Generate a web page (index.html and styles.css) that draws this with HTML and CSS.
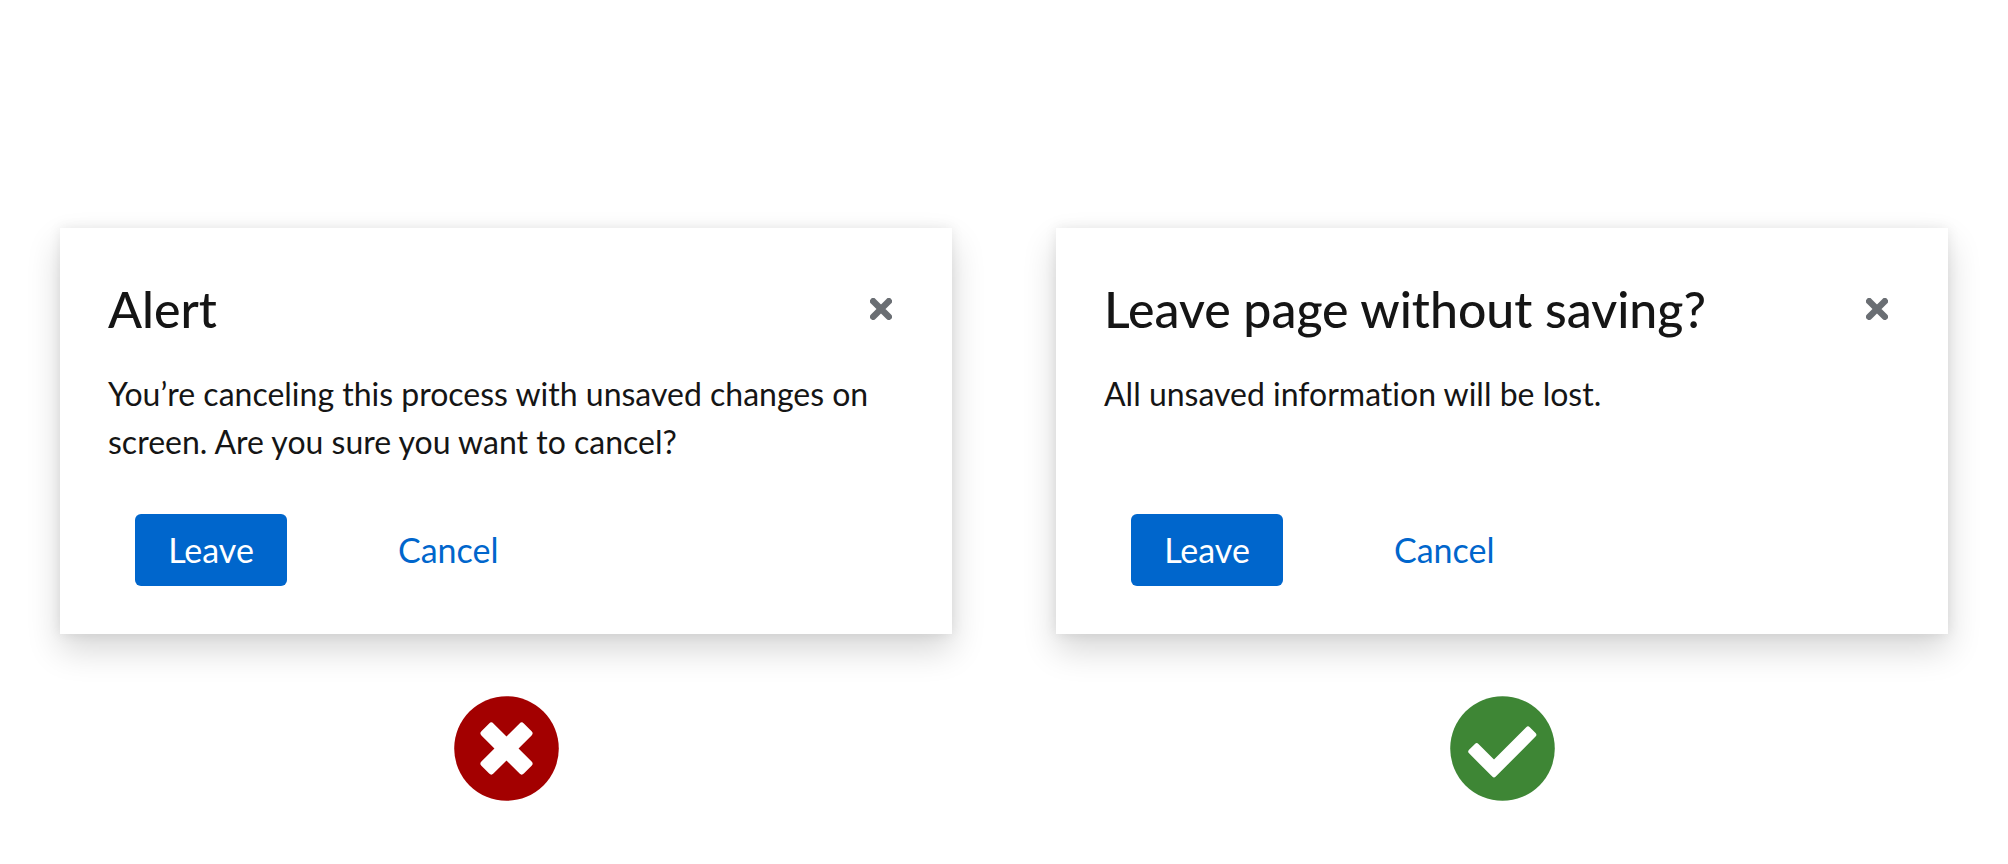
FILE: index.html
```html
<!DOCTYPE html>
<html lang="en">
<head>
<meta charset="utf-8">
<meta name="viewport" content="width=device-width, initial-scale=1">
<title>Dialog guidelines</title>
<link rel="stylesheet" href="styles.css">
</head>
<body>
<main class="examples">
  <section class="example">
    <div class="modal" role="dialog" aria-labelledby="title-dont">
      <header class="modal-header">
        <h2 class="modal-title" id="title-dont">Alert</h2>
        <button class="close" type="button" aria-label="Close">
          <svg class="close-icon" viewBox="0 0 22 22" aria-hidden="true"><path d="M3.2 3.2 18.8 18.8M18.8 3.2 3.2 18.8"/></svg>
        </button>
      </header>
      <p class="modal-body">You’re canceling this process with unsaved changes on screen. Are you sure you want to cancel?</p>
      <footer class="modal-footer">
        <button class="btn btn-primary" type="button">Leave</button>
        <button class="btn btn-link" type="button">Cancel</button>
      </footer>
    </div>
    <svg class="verdict" viewBox="0 0 105 105" role="img" aria-label="Don't">
      <circle class="bad" cx="52.5" cy="52.5" r="52.3"/>
      <g class="cross" transform="rotate(45 52.5 52.5)">
        <rect x="22.5" y="44" width="60" height="17" rx="3"/>
        <rect x="44" y="22.5" width="17" height="60" rx="3"/>
      </g>
    </svg>
  </section>
  <section class="example">
    <div class="modal" role="dialog" aria-labelledby="title-do">
      <header class="modal-header">
        <h2 class="modal-title" id="title-do">Leave page without saving?</h2>
        <button class="close" type="button" aria-label="Close">
          <svg class="close-icon" viewBox="0 0 22 22" aria-hidden="true"><path d="M3.2 3.2 18.8 18.8M18.8 3.2 3.2 18.8"/></svg>
        </button>
      </header>
      <p class="modal-body">All unsaved information will be lost.</p>
      <footer class="modal-footer">
        <button class="btn btn-primary" type="button">Leave</button>
        <button class="btn btn-link" type="button">Cancel</button>
      </footer>
    </div>
    <svg class="verdict" viewBox="0 0 105 105" role="img" aria-label="Do">
      <circle class="good" cx="52.5" cy="52.5" r="52.3"/>
      <path class="check" d="M20.8 55.6 26.7 49.7 44 66.9 78 33 83.8 38.8 44 78.8Z"/>
    </svg>
  </section>
</main>
</body>
</html>
```
FILE: styles.css
```css
* {
  box-sizing: border-box;
}

body {
  margin: 0;
  background: #fff;
  color: #151515;
  font-family: Lato, "Open Sans", sans-serif;
  font-size: 32px;
  font-variant-ligatures: none;
  line-height: 48px;
}

.examples {
  display: grid;
  grid-template-columns: 1fr 1fr;
  gap: 104px;
  padding: 228px 60px 60px;
}

.example {
  display: flex;
  flex-direction: column;
  align-items: center;
  gap: 62px;
}

.modal {
  display: flex;
  flex: 1;
  flex-direction: column;
  width: 100%;
  padding: 48px;
  background: #fff;
  box-shadow: 0 16px 32px rgba(3, 3, 3, 0.16), 0 0 12px rgba(3, 3, 3, 0.08);
}

.modal-header {
  display: flex;
  align-items: center;
  justify-content: space-between;
  margin-bottom: 28px;
}

.modal-title {
  margin: 0;
  font-size: 50px;
  font-weight: 500;
  line-height: 66px;
}

.close {
  display: flex;
  padding: 12px;
  border: 0;
  background: none;
  cursor: pointer;
}

.close-icon {
  width: 22px;
  height: 22px;
  fill: none;
  stroke: #6a6e73;
  stroke-width: 6.4;
  stroke-linecap: round;
}

.modal-body {
  flex: 1;
  margin: 0 0 48px;
}

.modal-footer {
  display: flex;
  gap: 78px;
  padding-left: 27px;
}

.btn {
  padding: 12px 33px;
  border: 0;
  border-radius: 6px;
  font: inherit;
  font-size: 34px;
  cursor: pointer;
}

.btn-primary {
  min-width: 152px;
  background: #06c;
  color: #fff;
}

.btn-link {
  background: none;
  color: #06c;
}

.verdict {
  width: 105px;
  height: 105px;
}

.bad {
  fill: #a30000;
}

.good {
  fill: #3e8635;
}

.cross {
  fill: #fff;
}

.check {
  fill: #fff;
  stroke: #fff;
  stroke-width: 5;
  stroke-linejoin: round;
}
```
